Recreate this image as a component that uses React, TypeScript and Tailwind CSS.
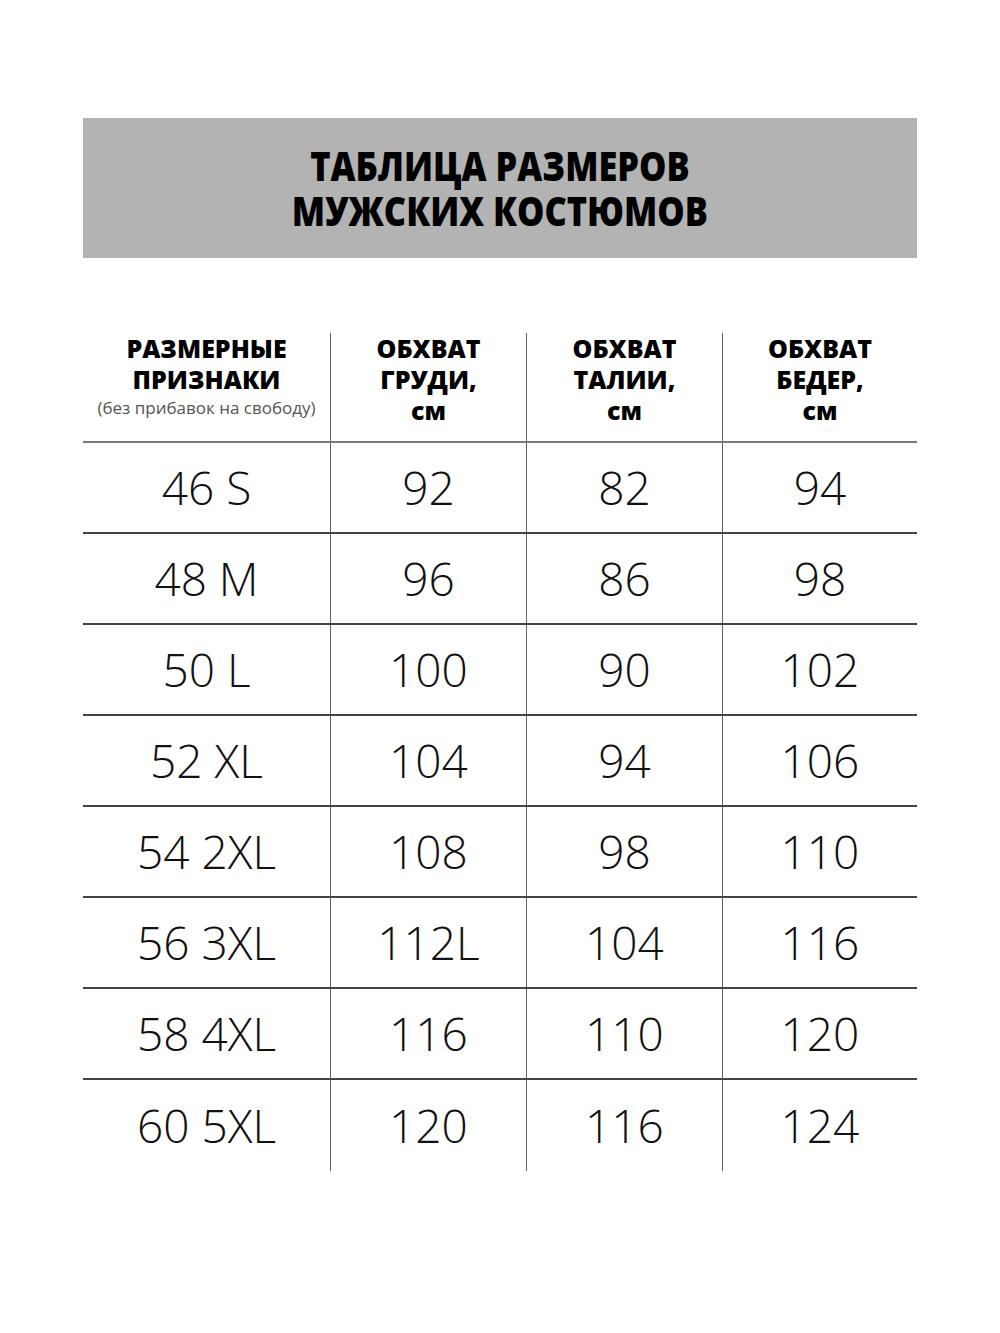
const rows = [
  ['46 S', '92', '82', '94'],
  ['48 M', '96', '86', '98'],
  ['50 L', '100', '90', '102'],
  ['52 XL', '104', '94', '106'],
  ['54 2XL', '108', '98', '110'],
  ['56 3XL', '112L', '104', '116'],
  ['58 4XL', '116', '110', '120'],
  ['60 5XL', '120', '116', '124'],
];

const cols = 'grid grid-cols-[247px_196px_196px_195px]';
const head = 'flex flex-col items-center text-[25px] font-extrabold leading-[31px] text-black';

export default function App() {
  return (
    <div className="min-h-[1333px] w-[1000px] bg-white font-['Open_Sans',sans-serif]">
      <div className="mx-auto w-[834px] pt-[118px]">
        {/* Заголовок */}
        <div className="flex h-[140px] flex-col items-center justify-center bg-[#b3b3b3]">
          <div className="scale-x-[0.86] text-center text-[40px] font-extrabold leading-[45px] text-black">
            <div>ТАБЛИЦА РАЗМЕРОВ</div>
            <div>МУЖСКИХ КОСТЮМОВ</div>
          </div>
        </div>

        {/* Таблица */}
        <div className="mt-[75px]">
          <div className={`${cols} h-[110px] border-b-2 border-[#7a7a7a]`}>
            <div className={head}>
              <span>РАЗМЕРНЫЕ</span>
              <span>ПРИЗНАКИ</span>
              <span className="text-[17px] font-normal leading-[26px] text-[#555]">(без прибавок на свободу)</span>
            </div>
            <div className={`${head} border-l border-[#666]`}>
              <span>ОБХВАТ</span>
              <span>ГРУДИ,</span>
              <span>см</span>
            </div>
            <div className={`${head} border-l border-[#666]`}>
              <span>ОБХВАТ</span>
              <span>ТАЛИИ,</span>
              <span>см</span>
            </div>
            <div className={`${head} border-l border-[#666]`}>
              <span>ОБХВАТ</span>
              <span>БЕДЕР,</span>
              <span>см</span>
            </div>
          </div>
          {rows.map((r, i) => (
            <div
              key={r[0]}
              className={`${cols} h-[91px] ${i < rows.length - 1 ? 'border-b-2 border-[#444]' : ''}`}
            >
              {r.map((v, j) => (
                <div
                  key={j}
                  className={`flex items-center justify-center text-[46px] font-light text-[#111] ${j > 0 ? 'border-l border-[#666]' : ''}`}
                >
                  {v}
                </div>
              ))}
            </div>
          ))}
        </div>
      </div>
    </div>
  );
}
